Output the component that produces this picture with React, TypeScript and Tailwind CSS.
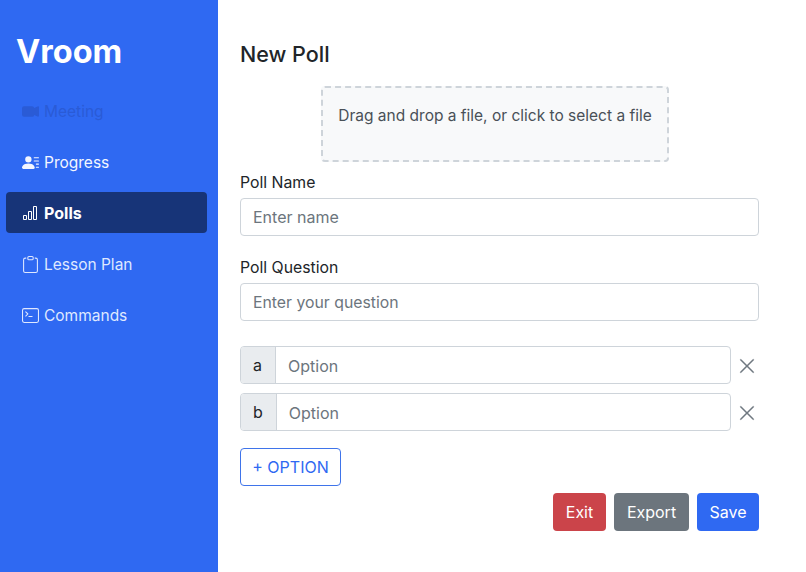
import { BsCameraVideoFill, BsPersonLinesFill, BsBarChart, BsClipboard, BsTerminal, BsXLg } from 'react-icons/bs'

const navItems = [
  { label: 'Meeting', icon: BsCameraVideoFill, size: 17, className: 'pt-[2px] text-[15.5px] text-[#2a5bd6]' },
  { label: 'Progress', icon: BsPersonLinesFill, size: 17, className: 'pt-[2px] text-[15.5px] text-[#f3f6ff]' },
  { label: 'Polls', icon: BsBarChart, size: 16, className: 'text-white font-bold bg-[#173478] rounded' },
  { label: 'Lesson Plan', icon: BsClipboard, size: 17, className: 'pt-[2px] text-[15.5px] text-[#dfe8ff]' },
  { label: 'Commands', icon: BsTerminal, size: 17, className: 'pt-[2px] text-[15.5px] text-[#dfe8ff]' },
]

function OptionRow({ letter }: { letter: string }) {
  return (
    <div className="flex items-center">
      <div className="flex w-[491px] h-[38px] rounded border border-[#ced4da] overflow-hidden">
        <span className="flex items-center pl-3 pr-[13px] bg-[#e9ecef] border-r border-[#ced4da] text-[#212529]">{letter}</span>
        <span className="flex items-center pt-px px-3 bg-white text-[#6c757d]">Option</span>
      </div>
      <BsXLg className="ml-[7px] mt-[2px] text-[#6c757d] stroke-current stroke-[0.4]" size={18} />
    </div>
  )
}

export default function App() {
  return (
    <div className="flex w-[806px] h-[572px] overflow-hidden bg-white font-['Inter',sans-serif] text-base text-[#212529]">
      <aside className="w-[218px] shrink-0 bg-[#2f69f2] pt-[28px] px-[6px]">
        <h1 className="pl-[10px] text-[32.5px] leading-[48px] font-bold text-white">Vroom</h1>
        <nav className="mt-[14px] flex flex-col gap-[10px]">
          {navItems.map(({ label, icon: Icon, size, className }) => (
            <div key={label} className={`flex items-center h-[41px] w-[201px] pl-[16px] ${className}`}>
              <span className="flex w-[22px] shrink-0">
                <Icon size={size} />
              </span>
              {label}
            </div>
          ))}
        </nav>
      </aside>

      <main className="w-[519px] ml-[22px] pt-[39px]">
        <h2 className="text-[21.5px] leading-[30px] font-medium">New Poll</h2>

        <div className="mt-[17px] ml-[81px] flex justify-center w-[348px] h-[76px] pt-[16px] rounded-sm border-2 border-dashed border-[#ced4da] bg-[#f8f9fa] text-[15.5px] leading-6 text-[#495057]">
          Drag and drop a file, or click to select a file
        </div>

        <label className="block mt-[8px] pt-px mb-[3px] text-[15.8px] leading-6">Poll Name</label>
        <div className="flex items-center h-[38px] px-3 rounded border border-[#ced4da] text-[#6c757d]">Enter name</div>

        <label className="block mt-[19px] pt-px mb-[3px] text-[15.8px] leading-6">Poll Question</label>
        <div className="flex items-center h-[38px] px-3 pt-[2px] rounded border border-[#ced4da] text-[15.8px] text-[#6c757d]">Enter your question</div>

        <div className="mt-[25px] flex flex-col gap-[9px]">
          <OptionRow letter="a" />
          <OptionRow letter="b" />
        </div>

        <button className="mt-[17px] block h-[38px] w-[101px] rounded border border-[#3f74ea] text-[#2f69f2]">+ OPTION</button>

        <div className="mt-[7px] flex justify-end gap-[8px] text-white">
          <button className="h-[38px] w-[53px] rounded bg-[#cb444a]">Exit</button>
          <button className="h-[38px] w-[75px] rounded bg-[#6c757d]">Export</button>
          <button className="h-[38px] w-[62px] rounded bg-[#2f69f2]">Save</button>
        </div>
      </main>
    </div>
  )
}
